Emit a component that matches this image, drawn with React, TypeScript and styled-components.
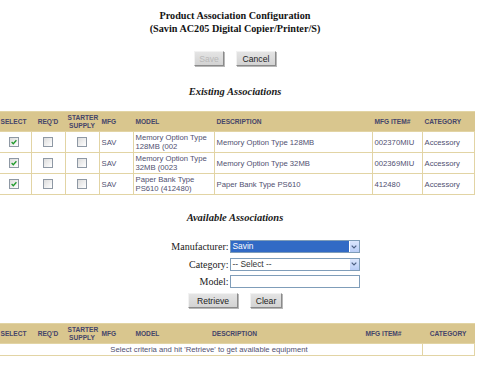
import styled, { createGlobalStyle } from "styled-components";

const GlobalStyle = createGlobalStyle`
  html, body {
    margin: 0;
    padding: 0;
    background: #ffffff;
  }
  body {
    font-family: "Liberation Serif", "Times New Roman", serif;
    color: #111111;
  }
`;

const Page = styled.div`
  width: 470px;
  display: flex;
  flex-direction: column;
  align-items: center;
`;

const Title = styled.h1`
  margin: 9px 0 0;
  font-family: "Liberation Serif", serif;
  font-size: 10.2px;
  line-height: 13px;
  font-weight: bold;
  text-align: center;
  color: #141414;
`;

const Actions = styled.div<{ $top: number }>`
  display: flex;
  justify-content: center;
  gap: 12px;
  margin-top: ${({ $top }) => $top}px;
`;

const Button = styled.button<{ $width: number }>`
  width: ${({ $width }) => $width}px;
  height: 15px;
  padding: 0;
  font-family: "Liberation Sans", Arial, sans-serif;
  font-size: 8.6px;
  color: ${({ disabled }) => (disabled ? "#b9b9b9" : "#222222")};
  background: linear-gradient(#e4e4e4, #d3d3d3);
  border: 1px solid;
  border-color: #f2f2f2 #8a8a8a #8a8a8a #f2f2f2;
  box-shadow: 1px 1px 0 #b8b8b8;
  cursor: default;
`;

const SectionTitle = styled.h2<{ $top: number }>`
  margin: ${({ $top }) => $top}px 0 0;
  font-family: "Liberation Serif", serif;
  font-size: 10.5px;
  line-height: 13px;
  font-weight: bold;
  font-style: italic;
  color: #1a1a1a;
`;

const Grid = styled.table<{ $top: number }>`
  margin-top: ${({ $top }) => $top}px;
  width: 470px;
  table-layout: fixed;
  border-collapse: separate;
  border-spacing: 1px;
  background: #e2d4a4;
  font-family: "Liberation Sans", Arial, sans-serif;
`;

const HeadCell = styled.th<{ $align?: string; $pad?: number }>`
  height: 19px;
  padding: 0 ${({ $pad }) => $pad ?? 2}px 0 2px;
  background: #d9c68e;
  box-shadow: 1px 0 0 #d9c68e;
  font-size: 6.6px;
  line-height: 7.5px;
  font-weight: bold;
  color: #45456a;
  text-align: ${({ $align }) => $align ?? "left"};
  vertical-align: middle;
  white-space: nowrap;
`;

const Cell = styled.td<{ $align?: string; $height?: number }>`
  height: ${({ $height }) => $height ?? 20}px;
  padding: 0 2px;
  background: #ffffff;
  font-size: 7.7px;
  line-height: 9px;
  color: #505070;
  text-align: ${({ $align }) => $align ?? "left"};
  vertical-align: middle;
  overflow: hidden;
`;

const Box = styled.span`
  display: inline-flex;
  align-items: center;
  justify-content: center;
  width: 10px;
  height: 10px;
  box-sizing: border-box;
  border: 1px solid #8e98a4;
  background: linear-gradient(135deg, #dcdcdc, #ffffff);
  vertical-align: middle;
`;

const Form = styled.div`
  display: grid;
  grid-template-columns: 118px 130px;
  grid-auto-rows: 13px;
  column-gap: 1px;
  row-gap: 4.5px;
  margin-top: 16px;
`;

const Label = styled.label`
  justify-self: end;
  font-family: "Liberation Serif", serif;
  font-size: 10px;
  line-height: 13px;
  color: #1a1a1a;
`;

const Dropdown = styled.div<{ $selected?: boolean }>`
  display: flex;
  box-sizing: border-box;
  height: 13px;
  border: 1px solid #7f9db9;
  background: #ffffff;
  font-family: "Liberation Sans", Arial, sans-serif;
  font-size: 8.4px;
  line-height: 11px;

  .value {
    flex: 1;
    margin: 0 1px 0 0;
    padding-left: 2px;
    background: ${({ $selected }) => ($selected ? "#316ac5" : "transparent")};
    color: ${({ $selected }) => ($selected ? "#ffffff" : "#333333")};
  }

  .arrow {
    width: 9px;
    display: flex;
    align-items: center;
    justify-content: center;
    background: linear-gradient(#dbe6fd, #b9cdf7);
  }
`;

const TextField = styled.input`
  box-sizing: border-box;
  height: 13px;
  width: 130px;
  margin: 0;
  padding: 0 2px;
  border: 1px solid #7f9db9;
  background: #ffffff;
  font-family: "Liberation Sans", Arial, sans-serif;
  font-size: 8.4px;
`;

const Check = ({ checked }: { checked?: boolean }) => (
  <Box>
    {checked && (
      <svg width="6" height="6" viewBox="0 0 6 6">
        <path d="M0.6 3 L2.3 4.7 L5.4 1.2" fill="none" stroke="#1f9a2a" strokeWidth="1.3" />
      </svg>
    )}
  </Box>
);

const Chevron = () => (
  <svg width="6" height="4" viewBox="0 0 6 4">
    <path d="M0.7 0.7 L3 3 L5.3 0.7" fill="none" stroke="#4d6185" strokeWidth="1.2" />
  </svg>
);

const existing = [
  { model: "Memory Option Type 128MB (002", desc: "Memory Option Type 128MB", item: "002370MIU" },
  { model: "Memory Option Type 32MB (0023", desc: "Memory Option Type 32MB", item: "002369MIU" },
  { model: "Paper Bank Type PS610 (412480)", desc: "Paper Bank Type PS610", item: "412480" },
];

export default function App() {
  return (
    <Page>
      <GlobalStyle />
      <Title>
        Product Association Configuration
        <br />
        (Savin AC205 Digital Copier/Printer/S)
      </Title>

      <Actions $top={16}>
        <Button $width={30} disabled>
          Save
        </Button>
        <Button $width={40}>Cancel</Button>
      </Actions>

      <SectionTitle $top={19}>Existing Associations</SectionTitle>

      <Grid $top={13}>
        <colgroup>
          <col style={{ width: 34 }} />
          <col style={{ width: 33 }} />
          <col style={{ width: 33 }} />
          <col style={{ width: 33 }} />
          <col style={{ width: 80 }} />
          <col style={{ width: 157 }} />
          <col style={{ width: 49 }} />
          <col style={{ width: 51 }} />
        </colgroup>
        <thead>
          <tr>
            <HeadCell $align="center">SELECT</HeadCell>
            <HeadCell $align="center">REQ'D</HeadCell>
            <HeadCell $align="center">
              STARTER
              <br />
              SUPPLY
            </HeadCell>
            <HeadCell>MFG</HeadCell>
            <HeadCell>MODEL</HeadCell>
            <HeadCell>DESCRIPTION</HeadCell>
            <HeadCell>MFG ITEM#</HeadCell>
            <HeadCell>CATEGORY</HeadCell>
          </tr>
        </thead>
        <tbody>
          {existing.map((row) => (
            <tr key={row.item}>
              <Cell $align="center">
                <Check checked />
              </Cell>
              <Cell $align="center">
                <Check />
              </Cell>
              <Cell $align="center">
                <Check />
              </Cell>
              <Cell>SAV</Cell>
              <Cell>{row.model}</Cell>
              <Cell>{row.desc}</Cell>
              <Cell>{row.item}</Cell>
              <Cell>Accessory</Cell>
            </tr>
          ))}
        </tbody>
      </Grid>

      <SectionTitle $top={16}>Available Associations</SectionTitle>

      <Form>
        <Label>Manufacturer:</Label>
        <Dropdown $selected>
          <span className="value">Savin</span>
          <span className="arrow">
            <Chevron />
          </span>
        </Dropdown>
        <Label>Category:</Label>
        <Dropdown>
          <span className="value">-- Select --</span>
          <span className="arrow">
            <Chevron />
          </span>
        </Dropdown>
        <Label>Model:</Label>
        <TextField />
      </Form>

      <Actions $top={5}>
        <Button $width={50}>Retrieve</Button>
        <Button $width={32}>Clear</Button>
      </Actions>

      <Grid $top={15}>
        <colgroup>
          <col style={{ width: 34 }} />
          <col style={{ width: 33 }} />
          <col style={{ width: 33 }} />
          <col style={{ width: 33 }} />
          <col style={{ width: 60 }} />
          <col style={{ width: 80 }} />
          <col style={{ width: 146 }} />
          <col style={{ width: 51 }} />
        </colgroup>
        <thead>
          <tr>
            <HeadCell $align="center">SELECT</HeadCell>
            <HeadCell $align="center">REQ'D</HeadCell>
            <HeadCell $align="center">
              STARTER
              <br />
              SUPPLY
            </HeadCell>
            <HeadCell>MFG</HeadCell>
            <HeadCell>MODEL</HeadCell>
            <HeadCell $align="center">DESCRIPTION</HeadCell>
            <HeadCell $align="right" $pad={20}>
              MFG ITEM#
            </HeadCell>
            <HeadCell $align="center">CATEGORY</HeadCell>
          </tr>
        </thead>
        <tbody>
          <tr>
            <Cell colSpan={7} $align="center" $height={11}>
              Select criteria and hit 'Retrieve' to get available equipment
            </Cell>
            <Cell $height={11} />
          </tr>
        </tbody>
      </Grid>
    </Page>
  );
}
